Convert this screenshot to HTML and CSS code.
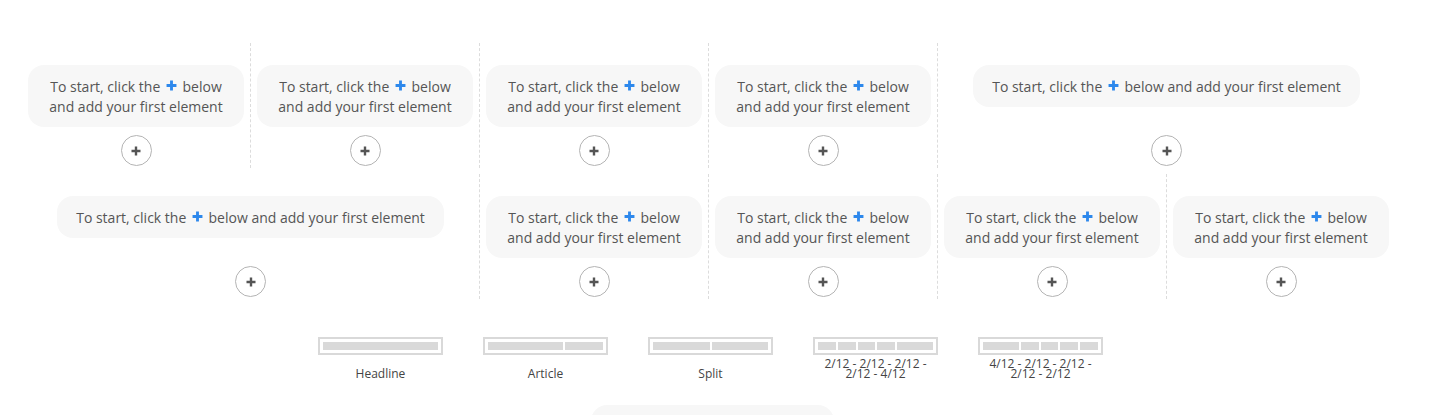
FILE: index.html
```html
<!DOCTYPE html>
<html lang="en">
<head>
    <meta charset="UTF-8">
    <meta name="viewport" content="width=device-width, initial-scale=1.0">
    <title>Page builder</title>
    <link rel="stylesheet" href="styles.css">
</head>
<body>
    <div class="builder">
        <!-- Row: 2/12 - 2/12 - 2/12 - 2/12 - 4/12 -->
        <div class="row">
            <div class="col">
                <div class="hint">To start, click the <span class="blue-plus"><svg viewBox="0 0 10 10"><path d="M5 0.5v9M0.5 5h9"/></svg></span> below and add your first element</div>
                <button class="add-btn"><svg viewBox="0 0 10 10"><path d="M5 0.5v9M0.5 5h9"/></svg></button>
            </div>
            <div class="col">
                <div class="hint">To start, click the <span class="blue-plus"><svg viewBox="0 0 10 10"><path d="M5 0.5v9M0.5 5h9"/></svg></span> below and add your first element</div>
                <button class="add-btn"><svg viewBox="0 0 10 10"><path d="M5 0.5v9M0.5 5h9"/></svg></button>
            </div>
            <div class="col">
                <div class="hint">To start, click the <span class="blue-plus"><svg viewBox="0 0 10 10"><path d="M5 0.5v9M0.5 5h9"/></svg></span> below and add your first element</div>
                <button class="add-btn"><svg viewBox="0 0 10 10"><path d="M5 0.5v9M0.5 5h9"/></svg></button>
            </div>
            <div class="col">
                <div class="hint">To start, click the <span class="blue-plus"><svg viewBox="0 0 10 10"><path d="M5 0.5v9M0.5 5h9"/></svg></span> below and add your first element</div>
                <button class="add-btn"><svg viewBox="0 0 10 10"><path d="M5 0.5v9M0.5 5h9"/></svg></button>
            </div>
            <div class="col wide">
                <div class="hint">To start, click the <span class="blue-plus"><svg viewBox="0 0 10 10"><path d="M5 0.5v9M0.5 5h9"/></svg></span> below and add your first element</div>
                <button class="add-btn"><svg viewBox="0 0 10 10"><path d="M5 0.5v9M0.5 5h9"/></svg></button>
            </div>
        </div>

        <!-- Row: 4/12 - 2/12 - 2/12 - 2/12 - 2/12 -->
        <div class="row">
            <div class="col wide">
                <div class="hint">To start, click the <span class="blue-plus"><svg viewBox="0 0 10 10"><path d="M5 0.5v9M0.5 5h9"/></svg></span> below and add your first element</div>
                <button class="add-btn"><svg viewBox="0 0 10 10"><path d="M5 0.5v9M0.5 5h9"/></svg></button>
            </div>
            <div class="col">
                <div class="hint">To start, click the <span class="blue-plus"><svg viewBox="0 0 10 10"><path d="M5 0.5v9M0.5 5h9"/></svg></span> below and add your first element</div>
                <button class="add-btn"><svg viewBox="0 0 10 10"><path d="M5 0.5v9M0.5 5h9"/></svg></button>
            </div>
            <div class="col">
                <div class="hint">To start, click the <span class="blue-plus"><svg viewBox="0 0 10 10"><path d="M5 0.5v9M0.5 5h9"/></svg></span> below and add your first element</div>
                <button class="add-btn"><svg viewBox="0 0 10 10"><path d="M5 0.5v9M0.5 5h9"/></svg></button>
            </div>
            <div class="col">
                <div class="hint">To start, click the <span class="blue-plus"><svg viewBox="0 0 10 10"><path d="M5 0.5v9M0.5 5h9"/></svg></span> below and add your first element</div>
                <button class="add-btn"><svg viewBox="0 0 10 10"><path d="M5 0.5v9M0.5 5h9"/></svg></button>
            </div>
            <div class="col">
                <div class="hint">To start, click the <span class="blue-plus"><svg viewBox="0 0 10 10"><path d="M5 0.5v9M0.5 5h9"/></svg></span> below and add your first element</div>
                <button class="add-btn"><svg viewBox="0 0 10 10"><path d="M5 0.5v9M0.5 5h9"/></svg></button>
            </div>
        </div>

        <!-- Layout presets -->
        <div class="layouts">
            <div class="layout">
                <div class="thumb"><span class="bar" style="flex: 12"></span></div>
                <div class="layout-name">Headline</div>
            </div>
            <div class="layout">
                <div class="thumb"><span class="bar" style="flex: 8"></span><span class="bar" style="flex: 4"></span></div>
                <div class="layout-name">Article</div>
            </div>
            <div class="layout">
                <div class="thumb"><span class="bar" style="flex: 6"></span><span class="bar" style="flex: 6"></span></div>
                <div class="layout-name">Split</div>
            </div>
            <div class="layout">
                <div class="thumb"><span class="bar" style="flex: 2"></span><span class="bar" style="flex: 2"></span><span class="bar" style="flex: 2"></span><span class="bar" style="flex: 2"></span><span class="bar" style="flex: 4"></span></div>
                <div class="layout-name">2/12 - 2/12 - 2/12 - 2/12 - 4/12</div>
            </div>
            <div class="layout">
                <div class="thumb"><span class="bar" style="flex: 4"></span><span class="bar" style="flex: 2"></span><span class="bar" style="flex: 2"></span><span class="bar" style="flex: 2"></span><span class="bar" style="flex: 2"></span></div>
                <div class="layout-name">4/12 - 2/12 - 2/12 - 2/12 - 2/12</div>
            </div>
        </div>

        <div class="bottom-card"></div>
    </div>
</body>
</html>
```

FILE: styles.css
```css
body {
    font-family: "Open Sans", Arial, sans-serif;
    margin: 0;
    padding: 0;
    background-color: #ffffff;
    color: #555;
    overflow: hidden;
}
.builder {
    padding: 43px 0 0 21px;
    width: 1374px;
}
.row {
    display: grid;
    grid-template-columns: repeat(6, 229px);
    margin-bottom: 6px;
}
.col {
    display: flex;
    flex-direction: column;
    align-items: center;
    height: 125px;
    padding: 22px 6px 2px;
    box-sizing: border-box;
    border-left: 1px dashed #dcdcdc;
}
.col:first-child {
    border-left-color: transparent;
}
.col.wide {
    grid-column: span 2;
}
.hint {
    background: #f7f7f7;
    border-radius: 16px;
    padding: 12px 19px 10px;
    font-size: 14px;
    line-height: 20px;
    text-align: center;
    color: #555;
    width: fit-content;
    box-sizing: border-box;
}
.blue-plus {
    display: inline-block;
    width: 11px;
    height: 11px;
    margin: 0 2px;
    vertical-align: 1px;
}
.blue-plus svg {
    display: block;
    width: 11px;
    height: 11px;
    stroke: #2d88ec;
    stroke-width: 2.6;
    fill: none;
}
.add-btn {
    flex-shrink: 0;
    margin-top: auto;
    width: 31px;
    height: 31px;
    border-radius: 50%;
    border: 1px solid #b4b4b4;
    background: #fff;
    padding: 0;
    display: flex;
    align-items: center;
    justify-content: center;
    cursor: pointer;
}
.add-btn svg {
    width: 10px;
    height: 10px;
    stroke: #555;
    stroke-width: 2.4;
    fill: none;
}
.layouts {
    display: flex;
    gap: 40px;
    margin: 38px 0 0 297px;
}
.layout {
    width: 125px;
    display: flex;
    flex-direction: column;
    align-items: center;
}
.thumb {
    width: 125px;
    height: 18px;
    box-sizing: border-box;
    border: 2px solid #d9d9d9;
    padding: 3px;
    display: flex;
    gap: 2px;
}
.bar {
    background: #d9d9d9;
    height: 8px;
}
.layout-name {
    height: 24px;
    display: flex;
    align-items: flex-end;
    justify-content: center;
    text-align: center;
    font-size: 12px;
    line-height: 10px;
    color: #444;
    padding: 0 2px;
}
.bottom-card {
    width: 243px;
    height: 60px;
    background: #f7f7f7;
    border-radius: 16px;
    margin: 26px 0 0 570px;
}
```
